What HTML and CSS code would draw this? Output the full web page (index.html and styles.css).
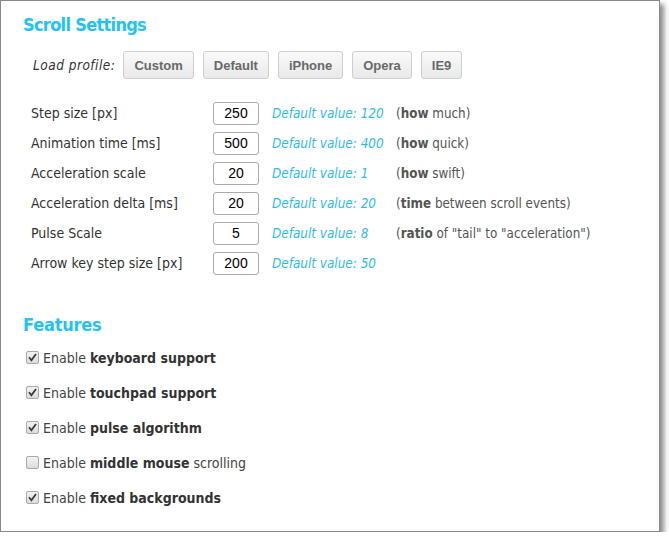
FILE: index.html
```html
<!DOCTYPE html>
<html>
<head>
<meta charset="utf-8">
<link rel="stylesheet" href="styles.css">
</head>
<body>
<div class="panel">
  <h1 class="title main-title">Scroll Settings</h1>
  <div class="profile">
    <span class="profile-label">Load profile:</span>
    <button class="btn">Custom</button>
    <button class="btn">Default</button>
    <button class="btn">iPhone</button>
    <button class="btn">Opera</button>
    <button class="btn">IE9</button>
  </div>
  <div class="settings">
    <div class="row"><span class="lbl">Step size [px]</span><span class="inp">250</span><span class="def">Default value: 120</span><span class="desc">(<b>how</b> much)</span></div>
    <div class="row"><span class="lbl">Animation time [ms]</span><span class="inp">500</span><span class="def">Default value: 400</span><span class="desc">(<b>how</b> quick)</span></div>
    <div class="row"><span class="lbl">Acceleration scale</span><span class="inp">20</span><span class="def">Default value: 1</span><span class="desc">(<b>how</b> swift)</span></div>
    <div class="row"><span class="lbl">Acceleration delta [ms]</span><span class="inp">20</span><span class="def">Default value: 20</span><span class="desc">(<b>time</b> between scroll events)</span></div>
    <div class="row"><span class="lbl">Pulse Scale</span><span class="inp">5</span><span class="def">Default value: 8</span><span class="desc">(<b>ratio</b> of "tail" to "acceleration")</span></div>
    <div class="row"><span class="lbl">Arrow key step size [px]</span><span class="inp">200</span><span class="def">Default value: 50</span><span class="desc"></span></div>
  </div>
  <h2 class="title features-title">Features</h2>
  <div class="features">
    <div class="feat"><span class="cb"><svg viewBox="0 0 13 13" width="13" height="13"><path d="M3 6.3 L5.4 9.2 L10 3" fill="none" stroke="#3a3a3a" stroke-width="1.8"/></svg></span> Enable <b>keyboard support</b></div>
    <div class="feat"><span class="cb"><svg viewBox="0 0 13 13" width="13" height="13"><path d="M3 6.3 L5.4 9.2 L10 3" fill="none" stroke="#3a3a3a" stroke-width="1.8"/></svg></span> Enable <b>touchpad support</b></div>
    <div class="feat"><span class="cb"><svg viewBox="0 0 13 13" width="13" height="13"><path d="M3 6.3 L5.4 9.2 L10 3" fill="none" stroke="#3a3a3a" stroke-width="1.8"/></svg></span> Enable <b>pulse algorithm</b></div>
    <div class="feat"><span class="cb"></span> Enable <b>middle mouse</b> scrolling</div>
    <div class="feat"><span class="cb"><svg viewBox="0 0 13 13" width="13" height="13"><path d="M3 6.3 L5.4 9.2 L10 3" fill="none" stroke="#3a3a3a" stroke-width="1.8"/></svg></span> Enable <b>fixed backgrounds</b></div>
  </div>
</div>
</body>
</html>
```
FILE: styles.css
```css
html, body {
  margin: 0;
  padding: 0;
  background: #fff;
}
body {
  font-family: "DejaVu Sans Condensed", "DejaVu Sans", sans-serif;
  font-stretch: condensed;
  font-size: 13px;
  color: #333;
}
.panel {
  box-sizing: border-box;
  width: 660px;
  height: 532px;
  border: 1px solid #8a8a8a;
  box-shadow: 4px 4px 5px rgba(0, 0, 0, 0.45);
  padding: 12px 22px 0 22px;
}
.title {
  margin: 0;
  font-size: 18px;
  font-weight: bold;
  line-height: 24px;
  color: #1fc3f5;
}
.main-title {
  letter-spacing: -0.7px;
}
.features-title {
  letter-spacing: -0.2px;
  margin-top: 35px;
}
.profile {
  display: flex;
  align-items: center;
  margin-top: 14px;
  padding-left: 10px;
}
.profile-label {
  font-style: italic;
  color: #333;
  margin-right: 8px;
  font-size: 13.5px;
  letter-spacing: 0.5px;
}
.btn {
  font-family: "Liberation Sans", Arial, sans-serif;
  font-weight: bold;
  font-size: 13px;
  color: #686868;
  height: 28px;
  padding: 0 10px;
  margin-right: 9px;
  border: 1px solid #cfcfcf;
  border-radius: 3px;
  background: linear-gradient(#fafafa, #e9e9e9);
}
.settings {
  margin-top: 19px;
  padding-left: 8px;
}
.row {
  display: grid;
  grid-template-columns: 182px 46px 137px auto;
  align-items: center;
  height: 30px;
}
.lbl {
  color: #333;
  font-size: 14px;
}
.inp {
  box-sizing: border-box;
  height: 23px;
  width: 46px;
  border: 1px solid #aaa;
  border-radius: 3px;
  text-align: center;
  line-height: 21px;
  font-family: "Liberation Sans", Arial, sans-serif;
  font-size: 14px;
  color: #000;
}
.def {
  margin-left: 13px;
  font-style: italic;
  font-size: 13.4px;
  color: #2fbcec;
}
.desc {
  color: #555;
  font-size: 13.3px;
}
.features {
  margin-top: 4px;
  padding-left: 3px;
}
.feat {
  height: 35px;
  line-height: 35px;
  font-size: 14px;
  color: #444;
}
.feat b {
  color: #333;
}
.cb {
  box-sizing: border-box;
  display: inline-block;
  vertical-align: middle;
  width: 13px;
  height: 13px;
  border: 1px solid #a9a9a9;
  border-radius: 2px;
  background: linear-gradient(#f2f2f2, #dcdcdc);
  margin-top: -4px;
  position: relative;
}
.cb svg {
  position: absolute;
  left: -1px;
  top: -1px;
}
```
